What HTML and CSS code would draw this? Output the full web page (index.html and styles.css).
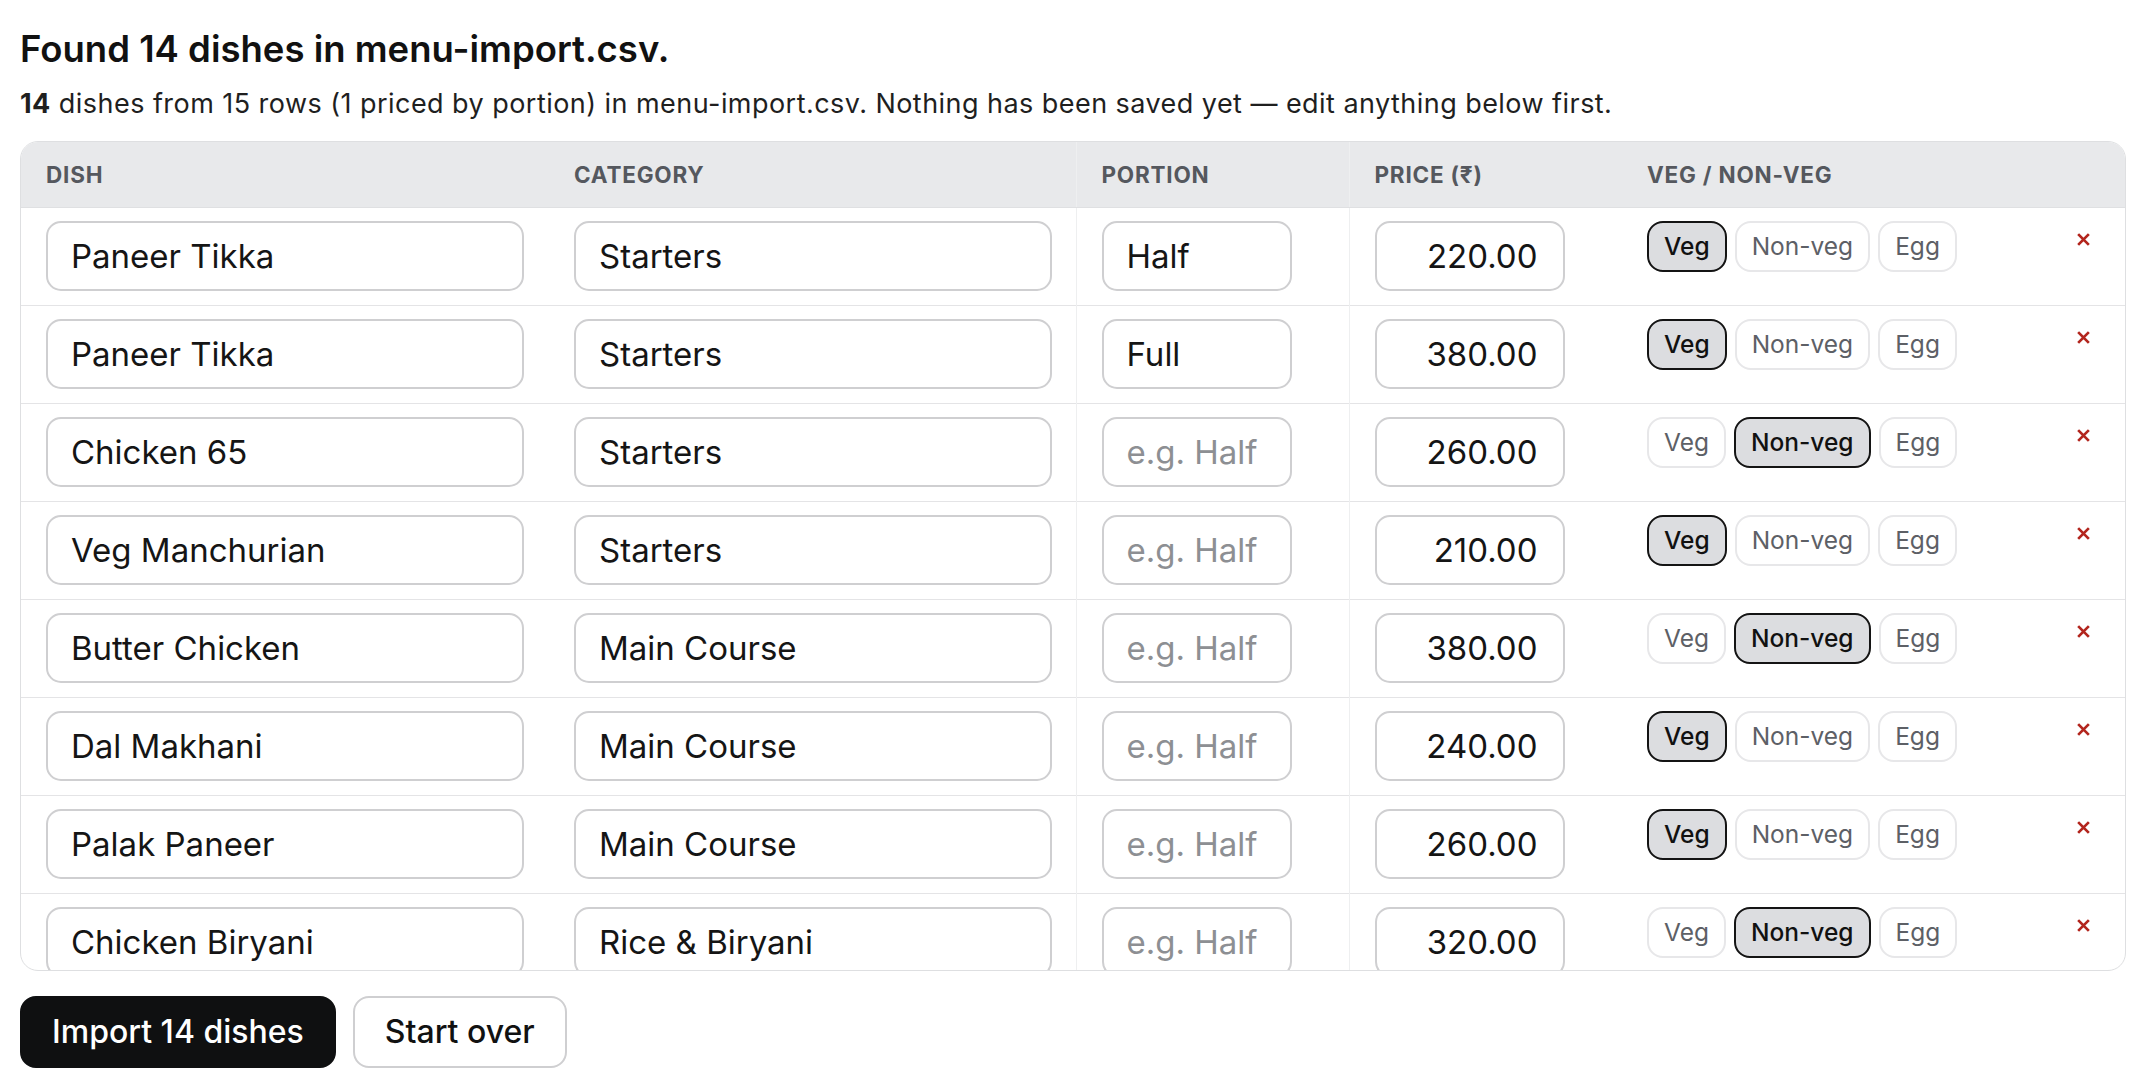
FILE: index.html
```html
<!DOCTYPE html>
<html lang="en">
<head>
<meta charset="utf-8">
<title>Import menu</title>
<link rel="stylesheet" href="styles.css">
</head>
<body>
<main class="page">
  <h1 class="title">Found 14 dishes in menu-import.csv.</h1>
  <p class="summary"><strong>14</strong> dishes from 15 rows (1 priced by portion) in menu-import.csv. Nothing has been saved yet — edit anything below first.</p>

  <div class="table-wrap">
    <table class="dishes">
      <colgroup>
        <col class="c-dish"><col class="c-cat"><col class="c-portion"><col class="c-price"><col class="c-veg"><col class="c-rm">
      </colgroup>
      <thead>
        <tr>
          <th>Dish</th><th>Category</th><th class="portion">Portion</th><th>Price (₹)</th><th>Veg / Non-veg</th><th></th>
        </tr>
      </thead>
      <tbody>
        <tr>
          <td><input class="field" value="Paneer Tikka"></td>
          <td><input class="field" value="Starters"></td>
          <td class="portion"><input class="field short" value="Half" placeholder="e.g. Half"></td>
          <td><input class="field short num" value="220.00"></td>
          <td class="veg"><div class="pills"><button class="pill on">Veg</button><button class="pill">Non-veg</button><button class="pill">Egg</button></div></td>
          <td class="rm"><button class="remove" aria-label="Remove"><svg viewBox="0 0 14 14" width="15" height="15"><path d="M2 2 L12 12 M12 2 L2 12"/></svg></button></td>
        </tr>
        <tr>
          <td><input class="field" value="Paneer Tikka"></td>
          <td><input class="field" value="Starters"></td>
          <td class="portion"><input class="field short" value="Full" placeholder="e.g. Half"></td>
          <td><input class="field short num" value="380.00"></td>
          <td class="veg"><div class="pills"><button class="pill on">Veg</button><button class="pill">Non-veg</button><button class="pill">Egg</button></div></td>
          <td class="rm"><button class="remove" aria-label="Remove"><svg viewBox="0 0 14 14" width="15" height="15"><path d="M2 2 L12 12 M12 2 L2 12"/></svg></button></td>
        </tr>
        <tr>
          <td><input class="field" value="Chicken 65"></td>
          <td><input class="field" value="Starters"></td>
          <td class="portion"><input class="field short" value="" placeholder="e.g. Half"></td>
          <td><input class="field short num" value="260.00"></td>
          <td class="veg"><div class="pills"><button class="pill">Veg</button><button class="pill on">Non-veg</button><button class="pill">Egg</button></div></td>
          <td class="rm"><button class="remove" aria-label="Remove"><svg viewBox="0 0 14 14" width="15" height="15"><path d="M2 2 L12 12 M12 2 L2 12"/></svg></button></td>
        </tr>
        <tr>
          <td><input class="field" value="Veg Manchurian"></td>
          <td><input class="field" value="Starters"></td>
          <td class="portion"><input class="field short" value="" placeholder="e.g. Half"></td>
          <td><input class="field short num" value="210.00"></td>
          <td class="veg"><div class="pills"><button class="pill on">Veg</button><button class="pill">Non-veg</button><button class="pill">Egg</button></div></td>
          <td class="rm"><button class="remove" aria-label="Remove"><svg viewBox="0 0 14 14" width="15" height="15"><path d="M2 2 L12 12 M12 2 L2 12"/></svg></button></td>
        </tr>
        <tr>
          <td><input class="field" value="Butter Chicken"></td>
          <td><input class="field" value="Main Course"></td>
          <td class="portion"><input class="field short" value="" placeholder="e.g. Half"></td>
          <td><input class="field short num" value="380.00"></td>
          <td class="veg"><div class="pills"><button class="pill">Veg</button><button class="pill on">Non-veg</button><button class="pill">Egg</button></div></td>
          <td class="rm"><button class="remove" aria-label="Remove"><svg viewBox="0 0 14 14" width="15" height="15"><path d="M2 2 L12 12 M12 2 L2 12"/></svg></button></td>
        </tr>
        <tr>
          <td><input class="field" value="Dal Makhani"></td>
          <td><input class="field" value="Main Course"></td>
          <td class="portion"><input class="field short" value="" placeholder="e.g. Half"></td>
          <td><input class="field short num" value="240.00"></td>
          <td class="veg"><div class="pills"><button class="pill on">Veg</button><button class="pill">Non-veg</button><button class="pill">Egg</button></div></td>
          <td class="rm"><button class="remove" aria-label="Remove"><svg viewBox="0 0 14 14" width="15" height="15"><path d="M2 2 L12 12 M12 2 L2 12"/></svg></button></td>
        </tr>
        <tr>
          <td><input class="field" value="Palak Paneer"></td>
          <td><input class="field" value="Main Course"></td>
          <td class="portion"><input class="field short" value="" placeholder="e.g. Half"></td>
          <td><input class="field short num" value="260.00"></td>
          <td class="veg"><div class="pills"><button class="pill on">Veg</button><button class="pill">Non-veg</button><button class="pill">Egg</button></div></td>
          <td class="rm"><button class="remove" aria-label="Remove"><svg viewBox="0 0 14 14" width="15" height="15"><path d="M2 2 L12 12 M12 2 L2 12"/></svg></button></td>
        </tr>
        <tr>
          <td><input class="field" value="Chicken Biryani"></td>
          <td><input class="field" value="Rice &amp; Biryani"></td>
          <td class="portion"><input class="field short" value="" placeholder="e.g. Half"></td>
          <td><input class="field short num" value="320.00"></td>
          <td class="veg"><div class="pills"><button class="pill">Veg</button><button class="pill on">Non-veg</button><button class="pill">Egg</button></div></td>
          <td class="rm"><button class="remove" aria-label="Remove"><svg viewBox="0 0 14 14" width="15" height="15"><path d="M2 2 L12 12 M12 2 L2 12"/></svg></button></td>
        </tr>
      </tbody>
    </table>
  </div>

  <div class="actions">
    <button class="btn primary">Import 14 dishes</button>
    <button class="btn secondary">Start over</button>
  </div>
</main>
</body>
</html>
```

FILE: styles.css
```css
* { box-sizing: border-box; }

html, body {
  margin: 0;
  background: #ffffff;
}

body {
  font-family: Inter, "Noto Sans", "Liberation Sans", sans-serif;
  color: #111111;
}

.page {
  padding: 27px 22px 0 20px;
}

.title {
  margin: 0;
  font-size: 36.5px;
  line-height: 44px;
  font-weight: 600;
  color: #111111;
}

.summary {
  margin: 15px 0 0;
  font-size: 27px;
  line-height: 36px;
  letter-spacing: 0.45px;
  color: #1f1f1f;
}

.summary strong {
  font-weight: 700;
}

.table-wrap {
  margin-top: 19px;
  border: 1px solid #dedfe1;
  border-radius: 18px;
  height: 830px;
  overflow-y: auto;
  overflow-x: hidden;
  scrollbar-width: none;
}

.table-wrap::-webkit-scrollbar { display: none; }

.dishes {
  width: 2104px;
  table-layout: fixed;
  border-collapse: collapse;
}

.c-dish { width: 528px; }
.c-cat { width: 527px; }
.c-portion { width: 273px; }
.c-price { width: 273px; }
.c-veg { width: 420px; }
.c-rm { width: 83px; }

.dishes th {
  height: 65px;
  background: #e8e9eb;
  color: #55585e;
  font-size: 22.5px;
  font-weight: 700;
  letter-spacing: 0.035em;
  text-transform: uppercase;
  text-align: left;
  padding: 0 25px;
  vertical-align: middle;
  border-bottom: 1px solid #dfe0e2;
}

.dishes td {
  padding: 13px 25px 14px;
  border-top: 1px solid #e4e4e6;
  vertical-align: top;
}

.dishes tbody tr:first-child td { border-top: none; }

.dishes .portion {
  border-left: 1px solid #eeeff0;
  border-right: 1px solid #eeeff0;
}

.field {
  display: block;
  width: 478px;
  height: 70px;
  border: 2px solid #cfcfd1;
  border-radius: 15px;
  padding: 0 23px;
  font-family: inherit;
  font-size: 33px;
  color: #151515;
  background: #ffffff;
  outline: none;
}

.field.short { width: 190px; }

.field.num {
  text-align: right;
  padding-right: 25px;
}

.field::placeholder {
  color: #8d8f93;
  opacity: 1;
}

.pills {
  display: flex;
  gap: 8px;
}

.pill {
  height: 51px;
  padding: 0 15px;
  border: 2px solid #e7e7e9;
  border-radius: 16px;
  background: #ffffff;
  color: #5d6066;
  font-family: inherit;
  font-size: 24.5px;
  line-height: 1;
}

.pill.on {
  border-color: #141414;
  background: #dcdde0;
  color: #111111;
  font-weight: 500;
}

.dishes td.rm {
  text-align: center;
  padding: 22px 0 0;
}

.remove {
  border: none;
  background: none;
  padding: 0;
  width: 20px;
  height: 20px;
  display: inline-flex;
  align-items: center;
  justify-content: center;
}

.remove svg path {
  stroke: #b3261e;
  stroke-width: 2.5;
  fill: none;
}

.actions {
  display: flex;
  gap: 17px;
  margin-top: 25px;
}

.btn {
  height: 72px;
  padding: 0 30px;
  border-radius: 16px;
  font-family: inherit;
  font-size: 32px;
  font-weight: 500;
  line-height: 1;
}

.btn.primary {
  background: #0f1011;
  color: #ffffff;
  border: 2px solid #0f1011;
}

.btn.secondary {
  background: #ffffff;
  color: #111111;
  border: 2px solid #cfcfd1;
}
```
